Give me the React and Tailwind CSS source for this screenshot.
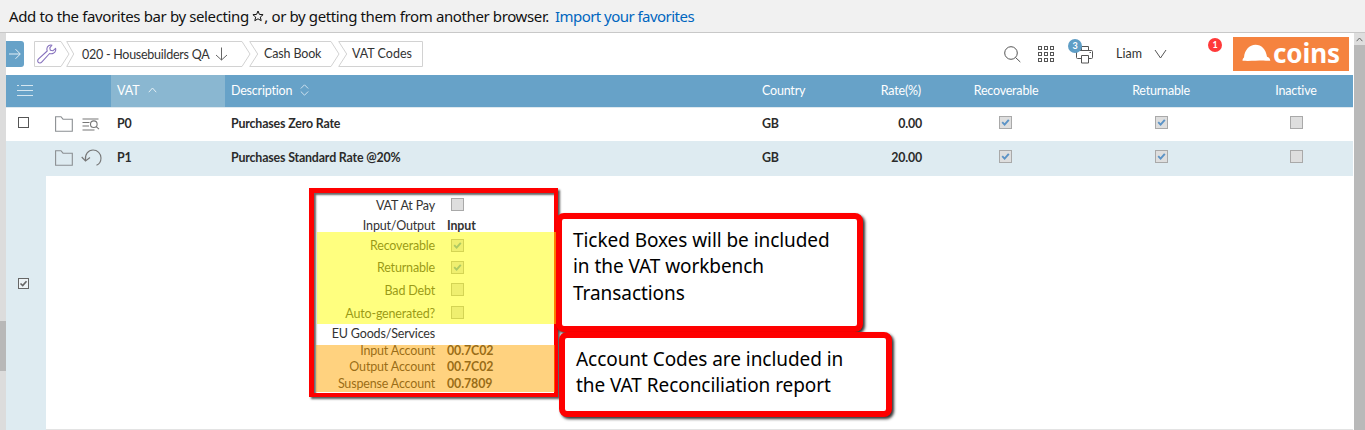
import React from 'react';

const ROWS = [
  { code: 'P0', description: 'Purchases Zero Rate', country: 'GB', rate: '0.00', selected: false },
  { code: 'P1', description: 'Purchases Standard Rate @20%', country: 'GB', rate: '20.00', selected: true },
];

const DETAILS = [
  { label: 'VAT At Pay', box: 'off', h: 'h-[21px]' },
  { label: 'Input/Output', value: 'Input', h: 'h-[19px]' },
  { label: 'Recoverable', box: 'on', h: 'h-[22px]' },
  { label: 'Returnable', box: 'on', h: 'h-[22px]' },
  { label: 'Bad Debt', box: 'off', h: 'h-[23px]' },
  { label: 'Auto-generated?', box: 'off', h: 'h-[23px]' },
  { label: 'EU Goods/Services', h: 'h-[17px]' },
  { label: 'Input Account', value: '00.7C02', h: 'h-[17px]' },
  { label: 'Output Account', value: '00.7C02', h: 'h-[16px]' },
  { label: 'Suspense Account', value: '00.7809', h: 'h-[17px]' },
];

const COLS = 'grid grid-cols-[40px_65px_114px_531px_70px_103px_154px_156px_114px]';

function Check({ on }) {
  return (
    <span className="flex h-[13px] w-[13px] shrink-0 items-center justify-center border border-[#a9a9a9] bg-[#dedede]">
      {on && (
        <svg width="9" height="9" viewBox="0 0 9 9" fill="none" stroke="#5b93c6" strokeWidth="1.9">
          <path d="M1.2 4.2 3.6 6.6 7.8 1.8" />
        </svg>
      )}
    </span>
  );
}

function Crumb({ width, shape, className = '', children }) {
  return (
    <div className={'relative flex h-[26px] shrink-0 items-center ' + className}>
      <svg className="absolute left-0 top-0" width={width} height="26" fill="#fff" stroke="#d2d2d2">
        <path d={shape} />
      </svg>
      <div className="relative flex items-center whitespace-nowrap">{children}</div>
    </div>
  );
}

function Folder() {
  return (
    <svg width="18" height="16" viewBox="0 0 18 16" fill="none" stroke="#8b8f92" strokeWidth="1.1">
      <path d="M.6 15.3V.7H6l2 2.5h9.3v12.1z" />
    </svg>
  );
}

function Header() {
  return (
    <header className="flex h-[42px] shrink-0 bg-white text-[12.5px] tracking-[-0.15px] text-[#333]">
      <div className="mt-2 flex h-[26px] w-[18px] items-center justify-center rounded-r-[3px] bg-[#67a2c8]">
        <svg width="14" height="12" viewBox="0 0 14 12" fill="none" stroke="#e4f0f7" strokeWidth="1">
          <path d="M1 6h11M7.5 1.2 12.3 6l-4.8 4.8" />
        </svg>
      </div>
      <nav className="ml-[10px] mt-2 flex">
        <Crumb width="36" className="w-8 pl-[3px]" shape="M.5.5H27l8 12.5-8 12.5H.5z">
          <svg width="20" height="20" viewBox="0 0 20 20" fill="none" stroke="#8671bd" strokeWidth="1.1" strokeLinejoin="round">
            <path d="M14.9 1.2c-2.3-.6-4.8 1-5 3.500-.1.900.1 1.600.3 2.300L1.600 14.900c-1.200 1.200-1.100 2.700-.3 3.500.900.9 2.400.8 3.400-.3l7.900-8.600c2.600.9 5.400-.4 6-2.900.2-.8.2-1.500 0-2.300l-2.800 2.500-2.400-.5-.6-2.500z" />
          </svg>
        </Crumb>
        <Crumb width="185" className="w-[183px] pl-4" shape="M.7.5H176l8 12.500-8 12.500H.7l7-12.500z">
          <span className="mt-[2px] w-[128px] tracking-[-0.26px]">020 - Housebuilders QA</span>
          <svg className="ml-[5px]" width="13" height="14" viewBox="0 0 13 14" fill="none" stroke="#666">
            <path d="M6.500.5v12.500M1 8l5.500 5L12 8" />
          </svg>
        </Crumb>
        <Crumb width="91" className="w-[89px] pl-[15px]" shape="M.7.5H82l8 12.500-8 12.500H.7l8-12.500z">Cash Book</Crumb>
        <Crumb width="86" className="w-[86px] pl-[14px]" shape="M.7.5H84.500v25H.7l8-12.500z">
          <span className="tracking-normal">VAT Codes</span>
        </Crumb>
      </nav>
      <div className="ml-auto flex items-center">
        <svg width="17" height="17" viewBox="0 0 17 17" fill="none" stroke="#555">
          <circle cx="7" cy="7" r="6.300" />
          <path d="m11.500 11.500 4.800 4.500" />
        </svg>
        <svg className="ml-[17px]" width="16" height="16" viewBox="0 0 16 16" fill="none" stroke="#555">
          {[0.5, 6.5, 12.5].map((y) =>
            [0.5, 6.5, 12.5].map((x) => <rect key={x + '-' + y} x={x} y={y} width="3" height="3" />)
          )}
        </svg>
        <div className="relative ml-[22px] h-[17px] w-[18px]">
          <svg width="18" height="18" viewBox="0 0 18 18" fill="none" stroke="#555">
            <path d="M5.500 4.500V.5h7v4M5.500 12.500h-4a1 1 0 0 1-1-1v-6a1 1 0 0 1 1-1h14a1 1 0 0 1 1 1v6a1 1 0 0 1-1 1h-3M5.500 9.500h7v7.500h-7zM13.500 6.500h1.500" />
          </svg>
          <span className="absolute -left-[8px] -top-[7px] flex h-[14px] w-[14px] items-center justify-center rounded-full bg-[#5f9ec6] text-[9px] font-bold text-white">3</span>
        </div>
        <span className="ml-[22px] tracking-normal">Liam</span>
        <svg className="ml-3" width="13" height="10" viewBox="0 0 13 10" fill="none" stroke="#555">
          <path d="M1 1l5.500 8L12 1" />
        </svg>
        <span className="-mt-[18px] ml-[41px] flex h-[14px] w-[14px] items-center justify-center rounded-full bg-[#ff3939] text-[9px] font-bold text-white">1</span>
        <div className="ml-[11px] mr-1 flex h-[34px] w-[116px] items-center bg-[#f5833f] text-white">
          <svg className="-mt-[2px] ml-[9px]" width="29" height="18" viewBox="0 0 29 18" fill="#fff">
            <path d="M.5 16.800C.5 15 1.200 14 2 13.500 2.500 6 7.500.8 13.500.8c6 0 10.500 4.700 11.500 12 1.700.5 3.200 1.700 3.300 3.900-2.500.4-4.500-.1-7-.1-7 0-13 .5-20.800.2z" />
          </svg>
          <span className="-mt-[3px] ml-[2px] font-['Noto_Sans'] text-[26px] font-bold leading-none tracking-[-0.1px]">coins</span>
        </div>
      </div>
    </header>
  );
}

function HeadRow() {
  return (
    <div className={COLS + ' h-[33px] border-b border-[#dfe9ef] bg-[#67a2c8] text-[12.5px] leading-[32px] tracking-[-0.2px] text-white'}>
      <div className="pl-[10px] pt-[10px]">
        <svg width="18" height="12" viewBox="0 0 18 12" stroke="#d5e6f0" fill="none">
          <path d="M1 .5h2M5 .5h12M1 5.500h16M1 10.500h16" />
        </svg>
      </div>
      <div />
      <div className="flex items-center bg-[#8ab7d1] pl-[6px]">
        <span className="tracking-normal">VAT</span>
        <svg className="-mt-[3px] ml-2" width="9" height="6" viewBox="0 0 9 6" fill="none" stroke="#e4eff5">
          <path d="M.8 5.200 4.500 1l3.700 4.200" />
        </svg>
      </div>
      <div className="flex items-center pl-[6px]">
        Description
        <svg className="-mt-[3px] ml-[8px]" width="9" height="12" viewBox="0 0 9 12" fill="none" stroke="#cfe2ee">
          <path d="M.8 4.500 4.500.8l3.700 3.700M.8 7.500l3.700 3.700 3.700-3.700" />
        </svg>
      </div>
      <div className="pl-[6px]">Country</div>
      <div className="pr-[8px] text-right">Rate(%)</div>
      <div className="text-center">Recoverable</div>
      <div className="text-center">Returnable</div>
      <div className="text-center">Inactive</div>
    </div>
  );
}

function Row({ row }) {
  return (
    <div className={COLS + ' items-center text-[12.4px] font-bold tracking-[-0.17px] text-[#2b2b2b] ' + (row.selected ? 'h-[35px] bg-[#deebf1]' : 'h-[33px] bg-white')}>
      <div className="flex justify-center pr-[5px]">
        {!row.selected && <span className="-mt-[4px] h-[11px] w-[11px] border border-[#555]" />}
      </div>
      <div className={'flex items-center pl-[9px] ' + (row.selected ? '-mt-[2px]' : '-mt-px')}>
        <Folder />
        {row.selected ? (
          <svg className="ml-2" width="21" height="17" viewBox="0 0 21 17" fill="none" stroke="#777" strokeWidth="1.1">
            <path d="M4.500 11.500C3.500 5 7.500 1 12 1c4.500 0 8 3.500 8 8 0 3-1.700 6-4.500 7.300M.7 8l3.800 4 4.500-3.500" />
          </svg>
        ) : (
          <svg className="ml-[9px]" width="18" height="13" viewBox="0 0 18 13" fill="none" stroke="#777" strokeWidth="1.100">
            <path d="M.5 1h16M.5 4.500h7M.5 8h6.500M.5 12h12M14.200 8.700l2.800 2.500" />
            <circle cx="11.800" cy="6.200" r="3.300" />
          </svg>
        )}
      </div>
      <div className="-mt-px pl-[6px]">{row.code}</div>
      <div className="-mt-px pl-[6px]">{row.description}</div>
      <div className="-mt-px pl-[6px]">{row.country}</div>
      <div className="-mt-px pr-[7px] text-right">{row.rate}</div>
      <div className="-mt-[4px] flex justify-center pr-[2px]"><Check on /></div>
      <div className="-mt-[4px] flex justify-center"><Check on /></div>
      <div className="-mt-[4px] flex justify-center"><Check /></div>
    </div>
  );
}

function Details() {
  return (
    <div className="flex h-[254px] bg-white">
      <div className="flex w-10 justify-center bg-[#deebf1] pr-[5px] pt-[102px]">
        <span className="flex h-[11px] w-[11px] items-center justify-center border border-[#666] bg-[#edf3f6]">
          <svg width="9" height="9" viewBox="0 0 9 9" fill="none" stroke="#666" strokeWidth="1.600">
            <path d="M1.500 4.500 3.700 6.500 7.500 2.200" />
          </svg>
        </span>
      </div>
      <div className="flex-1 border-b border-[#e3e3e3] pt-[19px]">
        {DETAILS.map((d) => (
          <div key={d.label} className={'grid grid-cols-[389px_1fr] items-center gap-x-3 text-[12.5px] tracking-[-0.17px] text-[#333] ' + d.h}>
            <span className="text-right leading-4">{d.label}</span>
            {d.box ? (
              <span className="-mt-[2px] pl-1"><Check on={d.box === 'on'} /></span>
            ) : (
              <span className="text-[12.4px] font-bold leading-4 tracking-[-0.1px]">{d.value}</span>
            )}
          </div>
        ))}
      </div>
    </div>
  );
}

function Annotations() {
  const callout = "absolute rounded-[8px] border-[6px] border-[#fe0000] bg-white font-['Noto_Sans'] text-[19px] leading-[26.5px] tracking-[-0.06px] text-black shadow-[2px_2px_3px_rgba(0,0,0,0.8)]";
  return (
    <>
      <div className="absolute left-[309px] top-[188px] h-[209px] w-[249px] border-[5px] border-b-4 border-r-4 border-[#fe0000] shadow-[2px_2px_2px_rgba(0,0,0,0.65),inset_2px_2px_2px_rgba(0,0,0,0.6)]" />
      <div className="absolute left-[317px] top-[232px] h-[92px] w-[239px] bg-[#ffff00]/50" />
      <div className="absolute left-[316px] top-[345px] h-[47px] w-[239px] bg-[#ffa500]/50" />
      <div className={callout + ' left-[556px] top-[213px] h-[119px] w-[307px] pl-[11px] pt-[8px]'}>
        <div>Ticked Boxes will be included</div>
        <div className="-mt-px mb-px">in the VAT workbench</div>
        <div>Transactions</div>
      </div>
      <div className={callout + ' left-[559px] top-[332px] h-[85px] w-[333px] pl-[11px] pt-[8px]'}>
        <div>Account Codes are included in</div>
        <div className="-mt-px">the VAT Reconciliation report</div>
      </div>
    </>
  );
}

export default function App() {
  return (
    <div className="relative flex h-[430px] w-[1365px] flex-col overflow-hidden bg-white font-['Lato',sans-serif]">
      <div className="flex h-[33px] shrink-0 items-center whitespace-pre border-b border-[#c8c8c8] bg-[#f1f1f1] pl-[9px] font-['Noto_Sans','DejaVu_Sans',sans-serif] text-[15px] tracking-[-0.38px] text-[#111]">
        <span>Add to the favorites bar by selecting </span>
        <svg width="12" height="12" viewBox="0 0 12 12" fill="none" stroke="#111">
          <path d="m6 1 1.400 3.400 3.700.3-2.800 2.400.9 3.600L6 8.800l-3.200 1.900.9-3.600L.9 4.700l3.700-.3z" />
        </svg>
        <span>, or by getting them from another browser.</span>
        <span className="ml-[6px] tracking-[-0.54px] text-[#0066bf]">Import your favorites</span>
      </div>
      <div className="flex flex-1">
        <div className="w-[6px] bg-[#dcdcdc] pt-[288px]">
          <div className="h-[50px] bg-[#b8b8b8]" />
        </div>
        <main className="flex w-[1347px] flex-col">
          <Header />
          <HeadRow />
          {ROWS.map((row) => <Row key={row.code} row={row} />)}
          <Details />
        </main>
        <div className="ml-[1px] w-[11px] bg-[#b9b9b9]">
          <div className="flex h-3 items-center justify-center bg-[#dedede]">
            <svg width="7" height="5" viewBox="0 0 7 5" fill="none" stroke="#666">
              <path d="M.6 4.200 3.500 1l2.900 3.200" />
            </svg>
          </div>
        </div>
      </div>
      <Annotations />
    </div>
  );
}
